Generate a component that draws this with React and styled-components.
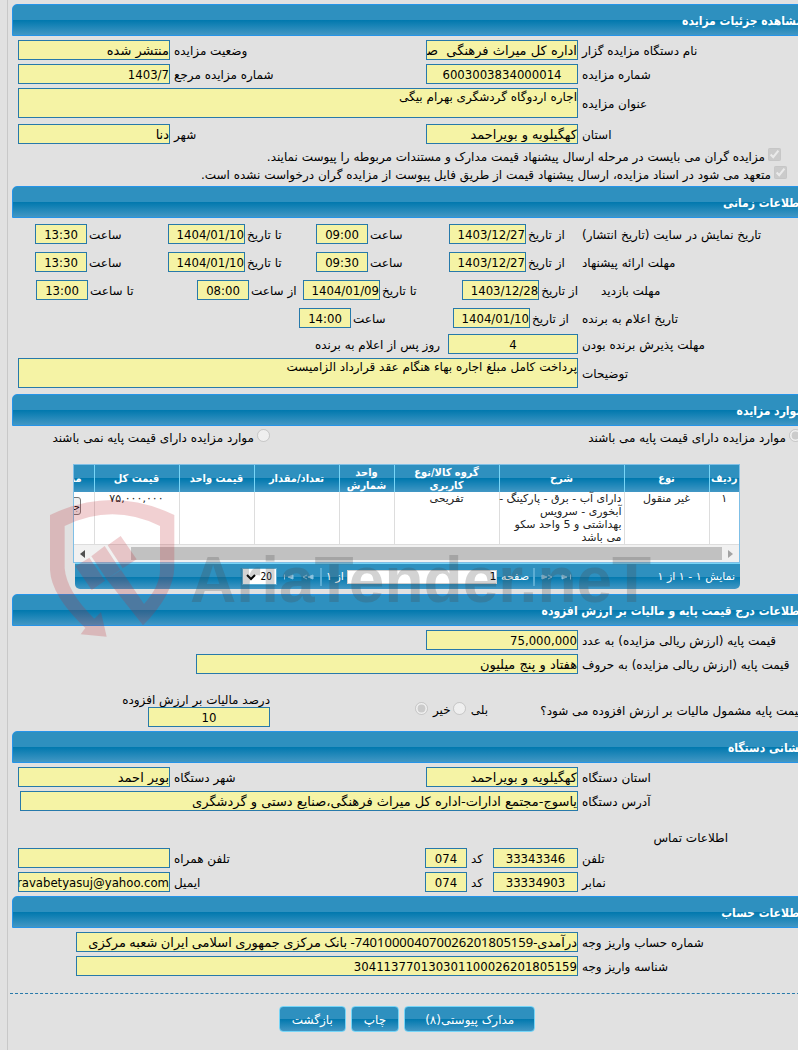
import React from 'react';
import styled, { createGlobalStyle } from 'styled-components';

const glossy = 'linear-gradient(to bottom, #2e90bf 0, #2e90bf 50%, #0078ae 50%, #4297c4 100%)';

const fonts = {
  text: "'DejaVu Sans', sans-serif",
  number: "'DejaVu Sans Condensed', 'DejaVu Sans', sans-serif",
  mixed: "'Noto Sans', 'DejaVu Sans', sans-serif",
};

const GlobalStyle = createGlobalStyle`
  * {
    box-sizing: border-box;
  }

  body {
    margin: 0;
    background: #e1e1e1;
    color: #000;
    font-family: ${fonts.text};
    font-size: 12px;
    line-height: 14px;
  }

  input,
  textarea,
  select,
  button {
    font: inherit;
  }
`;

const Viewport = styled.div`
  overflow: hidden;
`;

const Page = styled.main`
  direction: rtl;
  margin: 0 -12px 0 7px;
  padding: 4px 0 18px 2px;
  border-left: 1px solid #c8c8c8;
`;

const SectionTitle = styled.h2`
  height: 32px;
  margin: 0 0 0 2px;
  padding: 1px 6px 0 0;
  border: 1px solid #2694e8;
  border-radius: 5px 5px 0 0;
  background: ${glossy};
  color: #fff;
  font-family: ${fonts.number};
  font-size: 12px;
  font-weight: bold;
  line-height: 30px;
`;

const Body = styled.div`
  position: relative;
  display: flex;
  flex-direction: column;
  gap: 4px;
  padding: ${({ $pad }) => $pad || '4px'} 0 ${({ $pad }) => $pad || '4px'} 8px;
`;

const Row = styled.div`
  display: flex;
  align-items: center;
  margin-top: ${({ $space }) => $space || 0}px;
`;

const RowLabel = styled.label`
  flex: 1;
  padding: 2px 0 0 4px;
  text-align: left;
  white-space: nowrap;
`;

const Fields = styled.div`
  display: flex;
  align-items: center;
  width: 560px;
`;

const TextField = styled.input`
  width: ${({ $width }) => $width || 152}px;
  height: 20px;
  padding: 0;
  border: 1px solid #2779aa;
  border-radius: 0;
  outline: 0;
  background: #f5f3a5;
  color: #000;
  font-family: ${({ $font }) => fonts[$font || 'text']};
  font-size: 13px;
  text-align: ${({ $center }) => ($center ? 'center' : 'right')};
`;

const TextBox = styled.textarea`
  display: block;
  width: 100%;
  height: 30px;
  padding: 1px 0;
  border: 1px solid #2779aa;
  outline: 0;
  resize: none;
  background: #f5f3a5;
  color: #000;
  font-size: 12px;
  line-height: 14px;
`;

const CheckList = styled.div`
  display: flex;
  flex-direction: column;
  gap: 2px;
`;

const Choice = styled.label`
  display: flex;
  align-items: center;
  gap: 3px;
  height: ${({ $height }) => $height || 14}px;
  width: ${({ $width }) => ($width ? `${$width}px` : 'auto')};
  padding-right: ${({ $indent }) => $indent || 0}px;
  white-space: nowrap;

  input {
    flex: none;
    width: 13px;
    height: 13px;
    margin: 0 0 4px;
  }

  span {
    padding-top: 2px;
  }
`;

const TimeRows = styled.div`
  display: flex;
  flex-direction: column;
  gap: 8px;
  margin-bottom: 2px;
`;

const TimeLabel = styled.span`
  flex: 1;
  padding: 2px 0 0 ${({ $shift }) => ($shift ? 23 : 4)}px;
  text-align: left;
  white-space: nowrap;
`;

const TimeGroup = styled.label`
  display: flex;
  align-items: center;
  width: ${({ $width }) => $width}px;

  span {
    flex: 1;
    padding: 2px 0 0 2px;
    text-align: left;
    white-space: nowrap;
  }
`;

const Suffix = styled.span`
  padding: 2px 8px 0 0;
`;

const CodeLabel = styled.label`
  width: 26px;
  padding: 2px 0 0 4px;
  text-align: left;
`;

const GridBox = styled.div`
  width: 667px;
  margin: 16px 70px 1px 0;
`;

const GridView = styled.div`
  overflow: hidden;
  border: 1px solid #7fbfe6;
  background: #fff;
`;

const GridTable = styled.table`
  width: 701px;
  border-collapse: collapse;
  table-layout: fixed;
  color: #222;

  th,
  td {
    padding: 0 1px;
    line-height: 13px;
    text-align: center;
  }

  th {
    height: 27px;
    border-left: 1px solid #77d5f7;
    background: ${glossy};
    color: #fff;
    font-family: ${fonts.number};
    font-size: 11px;
    font-weight: bold;
  }

  td {
    height: 52px;
    border-left: 1px solid #ddd;
    font-size: 11px;
    vertical-align: top;
  }

  td.description {
    padding-right: 2px;
    text-align: right;
    white-space: nowrap;
  }
`;

const MoreButton = styled.button`
  width: 30px;
  height: 18px;
  margin-top: 5px;
  padding: 0;
  border: 1px solid #767676;
  border-radius: 3px;
  background: #efefef;
  color: #000;
  font-size: 10px;
`;

const ScrollTrack = styled.div`
  display: flex;
  align-items: center;
  justify-content: space-between;
  height: 18px;
  padding: 0 6px;
  border-top: 1px solid #ddd;
  background: #f1f1f1;

  svg {
    width: 5px;
    height: 8px;
  }
`;

const ScrollThumb = styled.div`
  flex: 1;
  height: 13px;
  margin: 0 6px 0 46px;
  background: #c1c1c1;
`;

const Pager = styled.div`
  display: flex;
  align-items: center;
  height: 26px;
  margin-left: 2px;
  padding: 0 5px;
  border-top: 1px solid #77d5f7;
  border-radius: 0 0 5px 5px;
  background: ${glossy};
  color: #fff;
  font-size: 11px;
  white-space: nowrap;
`;

const PagerInfo = styled.div`
  width: 157px;
`;

const PagerNav = styled.div`
  display: flex;
  gap: 7px;
  margin: 0 6px;
`;

const PagerButton = styled.button`
  display: flex;
  width: 12px;
  height: 14px;
  padding: 0;
  border: 0;
  background: none;

  svg {
    width: 12px;
    height: 14px;
    fill: #8cc3df;
    stroke: #8cc3df;
    stroke-width: 1;
  }
`;

const Divider = styled.span`
  width: 2px;
  height: 18px;
  background: #5badd4;
`;

const PagerPage = styled.div`
  display: flex;
  align-items: center;
  justify-content: space-between;
  width: 211px;
  padding: 0 4px;
`;

const PageInput = styled.input`
  width: 150px;
  height: 14px;
  padding: 0;
  border: 1px solid #d0d0d0;
  background: #fff;
  text-align: right;
`;

const PageSize = styled.select`
  direction: ltr;
  width: 35px;
  height: 17px;
  padding: 0 4px 0 0;
  border: 1px solid #5badd4;
  appearance: none;
  background: #fff
    url("data:image/svg+xml,%3Csvg xmlns='http://www.w3.org/2000/svg' width='10' height='7'%3E%3Cpath d='M1 1l4 4 4-4' fill='none' stroke='black' stroke-width='2'/%3E%3C/svg%3E")
    3px 5px no-repeat;
  color: #000;
  font-family: ${fonts.number};
  font-size: 10px;
  text-align: right;
  text-align-last: right;
`;

const Watermark = styled.div`
  position: absolute;
  z-index: 2;
  top: 64px;
  left: 30px;
  display: flex;
  direction: ltr;
  pointer-events: none;

  svg {
    width: 150px;
    height: 155px;
  }

  span {
    margin-top: 40px;
    color: rgba(70, 70, 70, 0.24);
    font-family: 'Liberation Sans', sans-serif;
    font-size: 64px;
    font-weight: bold;
    line-height: 100px;
    white-space: nowrap;
  }
`;

const TaxRow = styled.div`
  display: flex;
  align-items: center;
  margin-top: 15px;
`;

const Question = styled.span`
  width: 256px;
  margin-right: 6px;
  padding-top: 2px;
  white-space: nowrap;
`;

const TaxAnswer = styled.label`
  display: flex;
  align-items: center;
  gap: 5px;
  margin-right: ${({ $space }) => $space}px;

  input {
    width: 13px;
    height: 13px;
    margin: 0 0 4px;
  }
`;

const TaxRate = styled.label`
  display: flex;
  flex-direction: column;
  width: 252px;
  height: 34px;
  margin-right: auto;
  white-space: nowrap;
`;

const SubTitle = styled.h3`
  height: 15px;
  margin: 14px 82px 0 0;
  padding-top: 2px;
  font-size: 12px;
  font-weight: normal;
`;

const Footer = styled.footer`
  display: flex;
  justify-content: center;
  gap: 5px;
  margin-top: 13px;
  padding: 12px 6px 0 0;
  border-top: 1px dashed #2779aa;
`;

const ActionButton = styled.button`
  height: 26px;
  padding: 1px ${({ $wide }) => ($wide ? 20 : 12)}px 0;
  border: 1px solid #77d5f7;
  border-radius: 4px;
  background: ${glossy};
  color: #fff;
  font-size: 12px;
`;

const LabeledRow = ({ id, label, value, width, center, font, space, children }) => (
  <Row $space={space}>
    <RowLabel htmlFor={id}>{label}</RowLabel>
    <Fields>
      <TextField id={id} defaultValue={value} $width={width} $center={center} $font={font} readOnly />
      {children}
    </Fields>
  </Row>
);

const SecondField = ({ id, label, value, font }) => (
  <>
    <RowLabel htmlFor={id}>{label}</RowLabel>
    <TextField id={id} defaultValue={value} $font={font} readOnly />
  </>
);

const times = [
  {
    label: 'تاریخ نمایش در سایت (تاریخ انتشار)',
    groups: [
      ['از تاریخ', '1403/12/27', 129],
      ['ساعت', '09:00', 133],
      ['تا تاریخ', '1404/01/10', 148],
      ['ساعت', '13:30', 133],
    ],
  },
  {
    label: 'مهلت ارائه پیشنهاد',
    groups: [
      ['از تاریخ', '1403/12/27', 129],
      ['ساعت', '09:30', 133],
      ['تا تاریخ', '1404/01/10', 148],
      ['ساعت', '13:30', 133],
    ],
  },
  {
    label: 'مهلت بازدید',
    shift: true,
    groups: [
      ['از تاریخ', '1403/12/28', 114],
      ['تا تاریخ', '1404/01/09', 161],
      ['از ساعت', '08:00', 106],
      ['تا ساعت', '13:00', 161],
    ],
  },
  {
    label: 'تاریخ اعلام به برنده',
    groups: [
      ['از تاریخ', '1404/01/10', 125],
      ['ساعت', '14:00', 154],
    ],
  },
];

const columns = [
  ['ردیف', 30],
  ['نوع', 85],
  ['شرح', 125],
  ['گروه کالا/نوع کاربری', 105],
  ['واحد شمارش', 55],
  ['تعداد/مقدار', 85],
  ['قیمت واحد', 75],
  ['قیمت کل', 85],
  ['مدارک', 56],
];

const App = () => (
  <Viewport>
    <GlobalStyle />
    <Page>
      <SectionTitle>مشاهده جزئیات مزایده</SectionTitle>
      <Body>
        <LabeledRow id="org" label="نام دستگاه مزایده گزار" value="اداره کل میراث فرهنگی  صنایع دستی و گردشگری">
          <SecondField id="status" label="وضعیت مزایده" value="منتشر شده" />
        </LabeledRow>
        <LabeledRow id="number" label="شماره مزایده" value="6003003834000014" font="number" center>
          <SecondField id="reference" label="شماره مزایده مرجع" value="1403/7" font="number" />
        </LabeledRow>
        <Row>
          <RowLabel htmlFor="title">عنوان مزایده</RowLabel>
          <Fields>
            <TextBox id="title" defaultValue="اجاره اردوگاه گردشگری بهرام بیگی" readOnly />
          </Fields>
        </Row>
        <LabeledRow id="province" label="استان" value="کهگیلویه و بویراحمد" space={2}>
          <SecondField id="city" label="شهر" value="دنا" />
        </LabeledRow>
        <CheckList>
          <Choice $height={16} $indent={29}>
            <input type="checkbox" defaultChecked disabled />
            <span>مزایده گران می بایست در مرحله ارسال پیشنهاد قیمت مدارک و مستندات مربوطه را پیوست نمایند.</span>
          </Choice>
          <Choice $height={16} $indent={23}>
            <input type="checkbox" defaultChecked disabled />
            <span>
              متعهد می شود در اسناد مزایده، ارسال پیشنهاد قیمت از طریق فایل پیوست از مزایده گران درخواست نشده است.
            </span>
          </Choice>
        </CheckList>
      </Body>

      <SectionTitle>اطلاعات زمانی</SectionTitle>
      <Body $pad="6px">
        <TimeRows>
          {times.map(({ label, shift, groups }) => (
            <Row key={label}>
              <TimeLabel $shift={shift}>{label}</TimeLabel>
              <Fields>
                {groups.map(([name, value, width], i) => (
                  <TimeGroup key={i} $width={width}>
                    <span>{name}</span>
                    <TextField
                      defaultValue={value}
                      $width={value.length > 5 ? 77 : 52}
                      $center={value.length <= 5}
                      $font="number"
                      readOnly
                    />
                  </TimeGroup>
                ))}
              </Fields>
            </Row>
          ))}
        </TimeRows>
        <LabeledRow id="accept" label="مهلت پذیرش برنده بودن" value="4" width={130} font="number" center>
          <Suffix>روز پس از اعلام به برنده</Suffix>
        </LabeledRow>
        <Row>
          <RowLabel htmlFor="notes">توضیحات</RowLabel>
          <Fields>
            <TextBox id="notes" defaultValue="پرداخت کامل مبلغ اجاره بهاء هنگام عقد قرارداد الزامیست" readOnly />
          </Fields>
        </Row>
      </Body>

      <SectionTitle>موارد مزایده</SectionTitle>
      <Body>
        <Row>
          <Choice $width={540} $indent={8}>
            <input type="radio" name="base" defaultChecked disabled />
            <span>موارد مزایده دارای قیمت پایه می باشند</span>
          </Choice>
          <Choice>
            <input type="radio" name="base" disabled />
            <span>موارد مزایده دارای قیمت پایه نمی باشند</span>
          </Choice>
        </Row>
        <GridBox>
          <GridView>
            <GridTable>
              <colgroup>
                {columns.map(([name, width]) => (
                  <col key={name} style={{ width }} />
                ))}
              </colgroup>
              <thead>
                <tr>
                  {columns.map(([name]) => (
                    <th key={name}>{name}</th>
                  ))}
                </tr>
              </thead>
              <tbody>
                <tr>
                  <td>۱</td>
                  <td>غیر منقول</td>
                  <td className="description">
                    دارای آب - برق - پارکینگ -
                    <br />
                    آبخوری - سرویس
                    <br />
                    بهداشتی و 5 واحد سکو
                    <br />
                    می باشد
                  </td>
                  <td>تفریحی</td>
                  <td />
                  <td />
                  <td />
                  <td>۷۵,۰۰۰,۰۰۰</td>
                  <td>
                    <MoreButton type="button">جزئیات</MoreButton>
                  </td>
                </tr>
              </tbody>
            </GridTable>
            <ScrollTrack>
              <svg viewBox="0 0 5 8" fill="#a3a3a3">
                <path d="M0 0l5 4-5 4z" />
              </svg>
              <ScrollThumb />
              <svg viewBox="0 0 5 8" fill="#505050">
                <path d="M5 0L0 4l5 4z" />
              </svg>
            </ScrollTrack>
          </GridView>
          <Pager>
            <PagerInfo>نمایش ۱ - ۱ از ۱</PagerInfo>
            <PagerNav>
              <PagerButton type="button" aria-label="اولین صفحه">
                <svg viewBox="0 0 12 14">
                  <path d="M2 5l5 2-5 2zM10.500 4.500v5" />
                </svg>
              </PagerButton>
              <PagerButton type="button" aria-label="صفحه قبل">
                <svg viewBox="0 0 12 14">
                  <path d="M1 5l5 2-5 2z" />
                  <path d="M7 5l4 2-4 2" fill="none" />
                </svg>
              </PagerButton>
            </PagerNav>
            <Divider />
            <PagerPage>
              <label htmlFor="page">صفحه</label>
              <PageInput id="page" defaultValue="1" />
              <span>از ۱</span>
            </PagerPage>
            <Divider />
            <PagerNav>
              <PagerButton type="button" aria-label="صفحه بعد">
                <svg viewBox="0 0 12 14">
                  <path d="M11 5L6 7l5 2z" />
                  <path d="M5 5L1 7l4 2" fill="none" />
                </svg>
              </PagerButton>
              <PagerButton type="button" aria-label="آخرین صفحه">
                <svg viewBox="0 0 12 14">
                  <path d="M10 5L5 7l5 2zM1.500 4.500v5" />
                </svg>
              </PagerButton>
            </PagerNav>
            <PageSize aria-label="تعداد در صفحه" defaultValue="20">
              <option>20</option>
              <option>50</option>
            </PageSize>
          </Pager>
        </GridBox>
        <Watermark>
          <svg viewBox="0 0 450 465" fill="rgba(190, 40, 50, 0.22)">
            <path d="M30 75Q216-15 403 75V230Q402 312 309 406L200 268 243 240 312 342Q360 288 360 240V108Q217 38 74 108V235Q80 305 163 386L183 366 200 440 122 433 136 414Q34 318 30 240z" />
            <path d="M106 229L148 203 195 272 155 300z" />
            <path d="M154 199L194 168 241 239 200 268z" />
            <path d="M203 166L242 138 290 208 248 235z" />
          </svg>
          <span>AriaTender.neT</span>
        </Watermark>
      </Body>

      <SectionTitle>اطلاعات درج قیمت پایه و مالیات بر ارزش افزوده</SectionTitle>
      <Body>
        <LabeledRow id="price" label="قیمت پایه (ارزش ریالی مزایده) به عدد" value="75,000,000" font="number" />
        <LabeledRow id="words" label="قیمت پایه (ارزش ریالی مزایده) به حروف" value="هفتاد و پنج میلیون" width={382} />
        <TaxRow>
          <Question>قیمت پایه مشمول مالیات بر ارزش افزوده می شود؟</Question>
          <TaxAnswer $space={60}>
            بلی
            <input type="radio" name="tax" disabled />
          </TaxAnswer>
          <TaxAnswer $space={2}>
            خیر
            <input type="radio" name="tax" defaultChecked disabled />
          </TaxAnswer>
          <TaxRate>
            درصد مالیات بر ارزش افزوده
            <TextField defaultValue="10" $width={122} $font="number" $center readOnly />
          </TaxRate>
        </TaxRow>
      </Body>

      <SectionTitle>نشانی دستگاه</SectionTitle>
      <Body>
        <LabeledRow id="orgProvince" label="استان دستگاه" value="کهگیلویه و بویراحمد">
          <SecondField id="orgCity" label="شهر دستگاه" value="بویر احمد" />
        </LabeledRow>
        <LabeledRow
          id="address"
          label="آدرس دستگاه"
          value="یاسوج-مجتمع ادارات-اداره کل میراث فرهنگی،صنایع دستی و گردشگری"
          width={558}
        />
        <SubTitle>اطلاعات تماس</SubTitle>
        <LabeledRow id="phone" label="تلفن" value="33343346" width={85} font="number" center>
          <CodeLabel htmlFor="phoneCode">کد</CodeLabel>
          <TextField id="phoneCode" defaultValue="074" $width={42} $font="number" $center readOnly />
          <SecondField id="mobile" label="تلفن همراه" value="" />
        </LabeledRow>
        <LabeledRow id="fax" label="نمابر" value="33334903" width={85} font="number" center>
          <CodeLabel htmlFor="faxCode">کد</CodeLabel>
          <TextField id="faxCode" defaultValue="074" $width={42} $font="number" $center readOnly />
          <SecondField id="email" label="ایمیل" value="ravabetyasuj@yahoo.com" font="number" />
        </LabeledRow>
      </Body>

      <SectionTitle>اطلاعات حساب</SectionTitle>
      <Body>
        <LabeledRow
          id="account"
          label="شماره حساب واریز وجه"
          value="درآمدی-740100004070026201805159- بانک مرکزی جمهوری اسلامی ایران شعبه مرکزی"
          width={502}
          font="mixed"
        />
        <LabeledRow
          id="payId"
          label="شناسه واریز وجه"
          value="304113770130301100026201805159"
          width={502}
          font="number"
        />
      </Body>

      <Footer>
        <ActionButton type="button" $wide>
          مدارک پیوستی(۸)
        </ActionButton>
        <ActionButton type="button">چاپ</ActionButton>
        <ActionButton type="button">بازگشت</ActionButton>
      </Footer>
    </Page>
  </Viewport>
);

export default App;
